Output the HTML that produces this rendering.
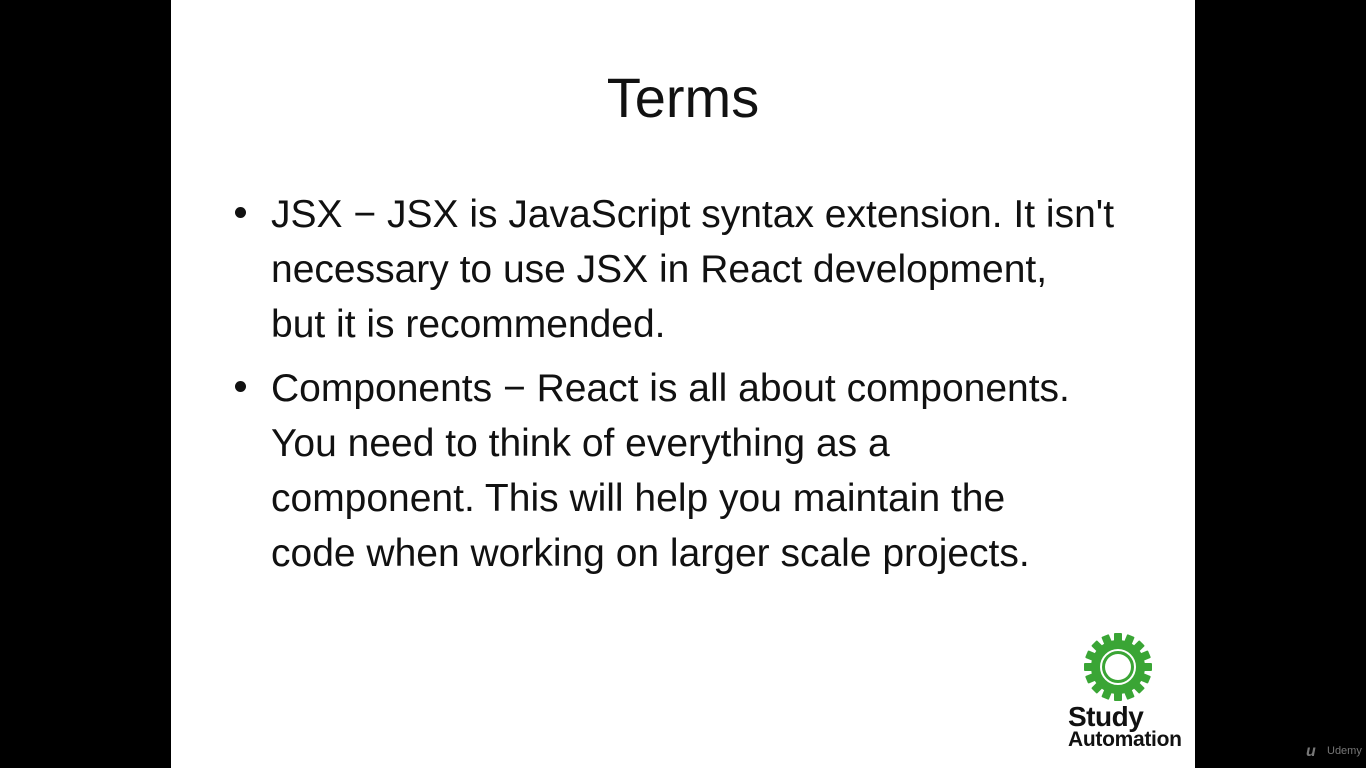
<!DOCTYPE html>
<html><head><meta charset="utf-8"><style>
body{margin:0;width:1366px;height:768px;background:#000;overflow:hidden;position:relative;font-family:"Liberation Sans",sans-serif}
.slide{position:absolute;left:171px;top:0;width:1024px;height:768px;background:#fff}
.t{position:absolute;white-space:nowrap;color:#111;line-height:1}
.title{font-size:56px;left:0;width:1366px;text-align:center;top:70px}
.l{font-size:39px;left:271px;letter-spacing:0}
.b{position:absolute;left:235px;width:11px;height:11px;border-radius:50%;background:#111}
</style></head><body>
<div class="slide"></div>
<div class="t title">Terms</div>
<div class="b" style="top:207px"></div>
<div class="t l" style="top:195px">JSX − JSX is JavaScript syntax extension. It isn't</div>
<div class="t l" style="top:250px">necessary to use JSX in React development,</div>
<div class="t l" style="top:305px">but it is recommended.</div>
<div class="b" style="top:381px"></div>
<div class="t l" style="top:369px">Components − React is all about components.</div>
<div class="t l" style="top:424px">You need to think of everything as a</div>
<div class="t l" style="top:479px">component. This will help you maintain the</div>
<div class="t l" style="top:534px">code when working on larger scale projects.</div>
<svg style="position:absolute;left:1083px;top:632px" width="70" height="70" viewBox="-35 -35 70 70">
<g fill="#3aa535">
<circle r="27"/>
<g id="teeth">
<rect x="-4" y="-34" width="8" height="10" rx="1"/>
</g>
<use href="#teeth" transform="rotate(22.5)"/><use href="#teeth" transform="rotate(45)"/><use href="#teeth" transform="rotate(67.5)"/><use href="#teeth" transform="rotate(90)"/><use href="#teeth" transform="rotate(112.5)"/><use href="#teeth" transform="rotate(135)"/><use href="#teeth" transform="rotate(157.5)"/><use href="#teeth" transform="rotate(180)"/><use href="#teeth" transform="rotate(202.5)"/><use href="#teeth" transform="rotate(225)"/><use href="#teeth" transform="rotate(247.5)"/><use href="#teeth" transform="rotate(270)"/><use href="#teeth" transform="rotate(292.5)"/><use href="#teeth" transform="rotate(315)"/><use href="#teeth" transform="rotate(337.5)"/>
</g>
<circle r="17" fill="none" stroke="#fff" stroke-width="2"/>
<circle r="13" fill="#fff"/>
</svg>
<div class="t" style="left:1068px;top:703px;font-size:28px;font-weight:bold;color:#111;letter-spacing:-0.5px">Study</div>
<div class="t" style="left:1068px;top:729px;font-size:21px;font-weight:bold;color:#111;letter-spacing:-0.3px">Automation</div>
<div class="t" style="left:1306px;top:744px;font-size:16px;font-weight:bold;font-style:italic;color:#777">u</div>
<div class="t" style="left:1327px;top:746px;font-size:11px;color:#777">Udemy</div>
</body></html>
